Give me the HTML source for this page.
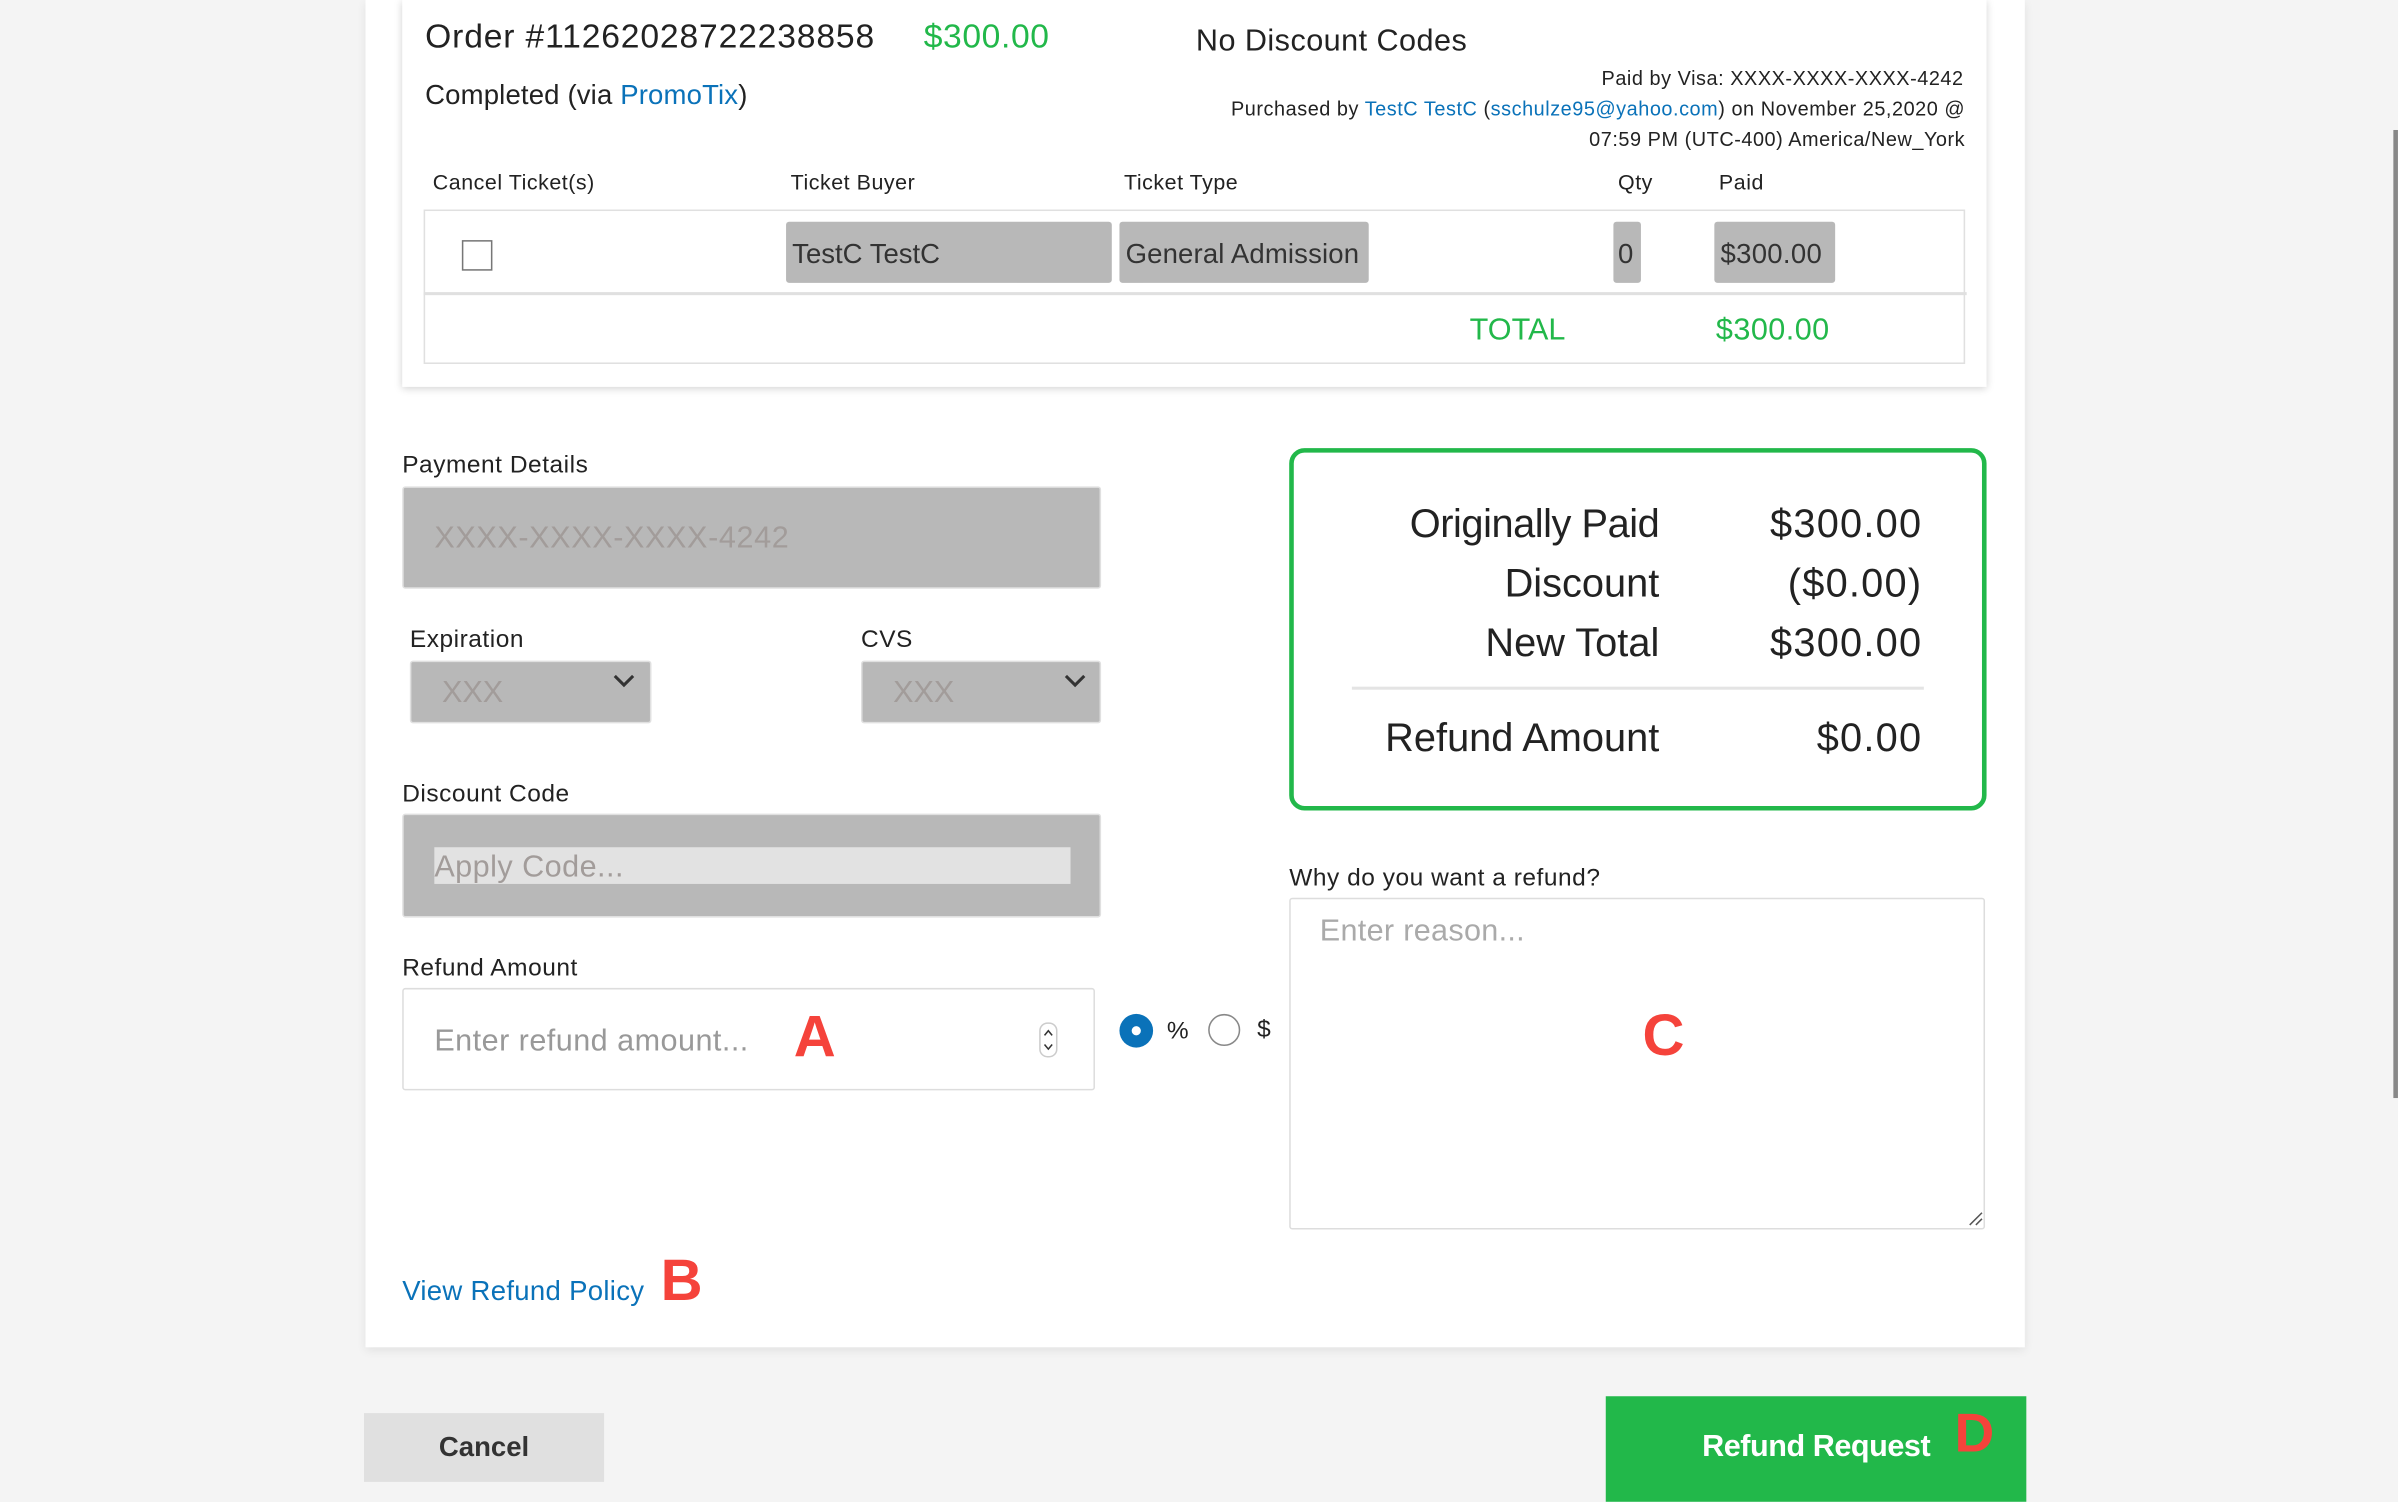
<!DOCTYPE html>
<html><head><meta charset="utf-8"><style>
html,body{margin:0;padding:0;background:#f4f4f4;overflow:hidden}
body{width:2398px;height:1502px;position:relative}
#s{position:absolute;left:0;top:0;width:1568px;height:982px;transform:scale(1.5293);transform-origin:0 0;font-family:"Liberation Sans",sans-serif;color:#222}
.a{position:absolute;white-space:nowrap}
.t{position:absolute;white-space:nowrap;line-height:1;transform:translateY(-50%)}
.g{color:#22b84a}.b{color:#0a72b9}
.red{color:#f5433b;font-weight:bold}
.gray{position:absolute;background:#b8b8b8;border-radius:2px}
.sm{letter-spacing:.35px}
</style></head><body><div id="s">
<div class="a" style="left:239px;top:0;width:1085px;height:881px;background:#fff;box-shadow:0 2px 6px rgba(0,0,0,.08)"></div>
<div class="a" style="left:263px;top:0;width:1036px;height:253px;background:#fff;box-shadow:0 1px 5px rgba(0,0,0,.18)"></div>

<div class="t" style="left:278px;top:24px;font-size:22px;letter-spacing:.55px">Order #11262028722238858</div>
<div class="t g" style="left:604px;top:24px;font-size:22px;letter-spacing:.4px">$300.00</div>
<div class="t" style="left:782px;top:27px;font-size:20px;letter-spacing:.3px">No Discount Codes</div>
<div class="t" style="left:278px;top:62px;font-size:18px;letter-spacing:.1px">Completed (via <span class="b">PromoTix</span>)</div>
<div class="t sm" style="right:284px;top:51px;font-size:13px">Paid by Visa: XXXX-XXXX-XXXX-4242</div>
<div class="t sm" style="right:283px;top:71px;font-size:13px">Purchased by <span class="b">TestC TestC</span> (<span class="b">sschulze95@yahoo.com</span>) on November 25,2020 @</div>
<div class="t sm" style="right:283px;top:91px;font-size:13px">07:59 PM (UTC-400) America/New_York</div>

<div class="t sm" style="left:283px;top:119px;font-size:14px">Cancel Ticket(s)</div>
<div class="t sm" style="left:517px;top:119px;font-size:14px">Ticket Buyer</div>
<div class="t sm" style="left:735px;top:119px;font-size:14px">Ticket Type</div>
<div class="t sm" style="left:1058px;top:119px;font-size:14px">Qty</div>
<div class="t sm" style="left:1124px;top:119px;font-size:14px">Paid</div>

<div class="a" style="left:277px;top:137px;width:1006px;height:99px;border:1.5px solid #e0e0e0"></div>
<div class="a" style="left:277px;top:191px;width:1009px;height:2px;background:#e0e0e0"></div>
<div class="a" style="left:302px;top:157px;width:18px;height:18px;border:1.5px solid #777"></div>
<div class="gray" style="left:514px;top:145px;width:213px;height:40px"></div>
<div class="gray" style="left:732px;top:145px;width:163px;height:40px"></div>
<div class="gray" style="left:1055px;top:145px;width:18px;height:40px"></div>
<div class="gray" style="left:1121px;top:145px;width:79px;height:40px"></div>
<div class="t" style="left:518px;top:166px;font-size:18px;color:#333">TestC TestC</div>
<div class="t" style="left:736px;top:166px;font-size:18px;color:#333;letter-spacing:.1px">General Admission</div>
<div class="t" style="left:1058px;top:166px;font-size:18px;color:#333">0</div>
<div class="t" style="left:1125px;top:166px;font-size:18px;color:#333;letter-spacing:.2px">$300.00</div>
<div class="t g" style="left:961px;top:216px;font-size:20px">TOTAL</div>
<div class="t g" style="left:1122px;top:216px;font-size:20px;letter-spacing:.3px">$300.00</div>

<div class="t sm" style="left:263px;top:305px;font-size:16px">Payment Details</div>
<div class="gray" style="left:263px;top:318px;width:455px;height:65px;border:1px solid #e0e0e0"></div>
<div class="t" style="left:284px;top:352px;font-size:20px;color:#a29c9a;letter-spacing:.4px">XXXX-XXXX-XXXX-4242</div>
<div class="t sm" style="left:268px;top:419px;font-size:16px">Expiration</div>
<div class="t sm" style="left:563px;top:419px;font-size:16px">CVS</div>
<div class="gray" style="left:268px;top:432px;width:156px;height:39px;border:1px solid #e0e0e0"></div>
<div class="gray" style="left:563px;top:432px;width:155px;height:39px;border:1px solid #e0e0e0"></div>
<div class="t" style="left:289px;top:453px;font-size:20px;color:#a29c9a">XXX</div>
<div class="t" style="left:584px;top:453px;font-size:20px;color:#a29c9a">XXX</div>
<svg class="a" style="left:400px;top:440px" width="16" height="12"><path d="M2 2l6 6 6-6" stroke="#333" stroke-width="2" fill="none"/></svg>
<svg class="a" style="left:695px;top:440px" width="16" height="12"><path d="M2 2l6 6 6-6" stroke="#333" stroke-width="2" fill="none"/></svg>

<div class="t sm" style="left:263px;top:520px;font-size:16px">Discount Code</div>
<div class="gray" style="left:263px;top:532px;width:455px;height:66px;border:1px solid #e0e0e0"></div>
<div class="a" style="left:284px;top:554px;width:416px;height:24px;background:#e2e2e2"></div>
<div class="t" style="left:284px;top:567px;font-size:20px;color:#a29c9a;letter-spacing:.3px">Apply Code...</div>

<div class="t sm" style="left:263px;top:634px;font-size:16px">Refund Amount</div>
<div class="a" style="left:263px;top:646px;width:451px;height:65px;border:1.5px solid #ddd;border-radius:2px;background:#fff"></div>
<div class="t" style="left:284px;top:681px;font-size:20px;color:#999;letter-spacing:.3px">Enter refund amount...</div>
<div class="t red" style="left:519px;top:679px;font-size:38px">A</div>
<svg class="a" style="left:679px;top:668px" width="13" height="24"><rect x="1" y="1" width="11" height="22" rx="5" fill="#fff" stroke="#ccc"/><path d="M4 9l2.5-3 2.5 3M4 15l2.5 3 2.5-3" stroke="#333" fill="none"/></svg>
<div class="a" style="left:732px;top:663px;width:22px;height:22px;border-radius:50%;background:#0a72b9"></div>
<div class="a" style="left:740px;top:671px;width:6px;height:6px;border-radius:50%;background:#fff"></div>
<div class="t" style="left:763px;top:675px;font-size:16px">%</div>
<div class="a" style="left:790px;top:663px;width:19px;height:19px;border-radius:50%;border:1.5px solid #888"></div>
<div class="t" style="left:822px;top:674px;font-size:16px">$</div>

<div class="a" style="left:843px;top:293px;width:450px;height:231px;border:3px solid #22b84a;border-radius:10px"></div>
<div class="t" style="right:483px;top:342px;font-size:26px;letter-spacing:-.3px">Originally Paid</div>
<div class="t" style="right:311px;top:342px;font-size:26px;letter-spacing:.8px">$300.00</div>
<div class="t" style="right:483px;top:381px;font-size:26px">Discount</div>
<div class="t" style="right:311px;top:381px;font-size:26px;letter-spacing:.8px">($0.00)</div>
<div class="t" style="right:483px;top:420px;font-size:26px">New Total</div>
<div class="t" style="right:311px;top:420px;font-size:26px;letter-spacing:.8px">$300.00</div>
<div class="a" style="left:884px;top:449px;width:374px;height:2px;background:#e4e4e4"></div>
<div class="t" style="right:483px;top:482px;font-size:26px">Refund Amount</div>
<div class="t" style="right:311px;top:482px;font-size:26px;letter-spacing:.8px">$0.00</div>

<div class="t sm" style="left:843px;top:575px;font-size:16px">Why do you want a refund?</div>
<div class="a" style="left:843px;top:587px;width:453px;height:215px;border:1.5px solid #ddd;border-radius:2px"></div>
<div class="t" style="left:863px;top:609px;font-size:20px;color:#aaa;letter-spacing:.2px">Enter reason...</div>
<div class="t red" style="left:1074px;top:678px;font-size:38px">C</div>
<svg class="a" style="left:1287px;top:792px" width="10" height="10"><path d="M1 9L9 1M5 9L9 5" stroke="#555" stroke-width="1"/></svg>

<div class="t b" style="left:263px;top:844px;font-size:18px;letter-spacing:.2px">View Refund Policy</div>
<div class="t red" style="left:432px;top:838px;font-size:38px">B</div>

<div class="a" style="left:238px;top:924px;width:157px;height:45px;background:#e0e0e0"></div>
<div class="t" style="left:238px;width:157px;text-align:center;top:946px;font-size:18px;font-weight:bold;color:#333">Cancel</div>
<div class="a" style="left:1050px;top:913px;width:275px;height:69px;background:#22b84a"></div>
<div class="t" style="left:1113px;top:946px;font-size:20px;font-weight:bold;color:#fff;letter-spacing:-.3px">Refund Request</div>
<div class="t red" style="left:1278px;top:937px;font-size:36px">D</div>

<div class="a" style="left:1565px;top:85px;width:3px;height:633px;background:#888"></div>
</div></body></html>
